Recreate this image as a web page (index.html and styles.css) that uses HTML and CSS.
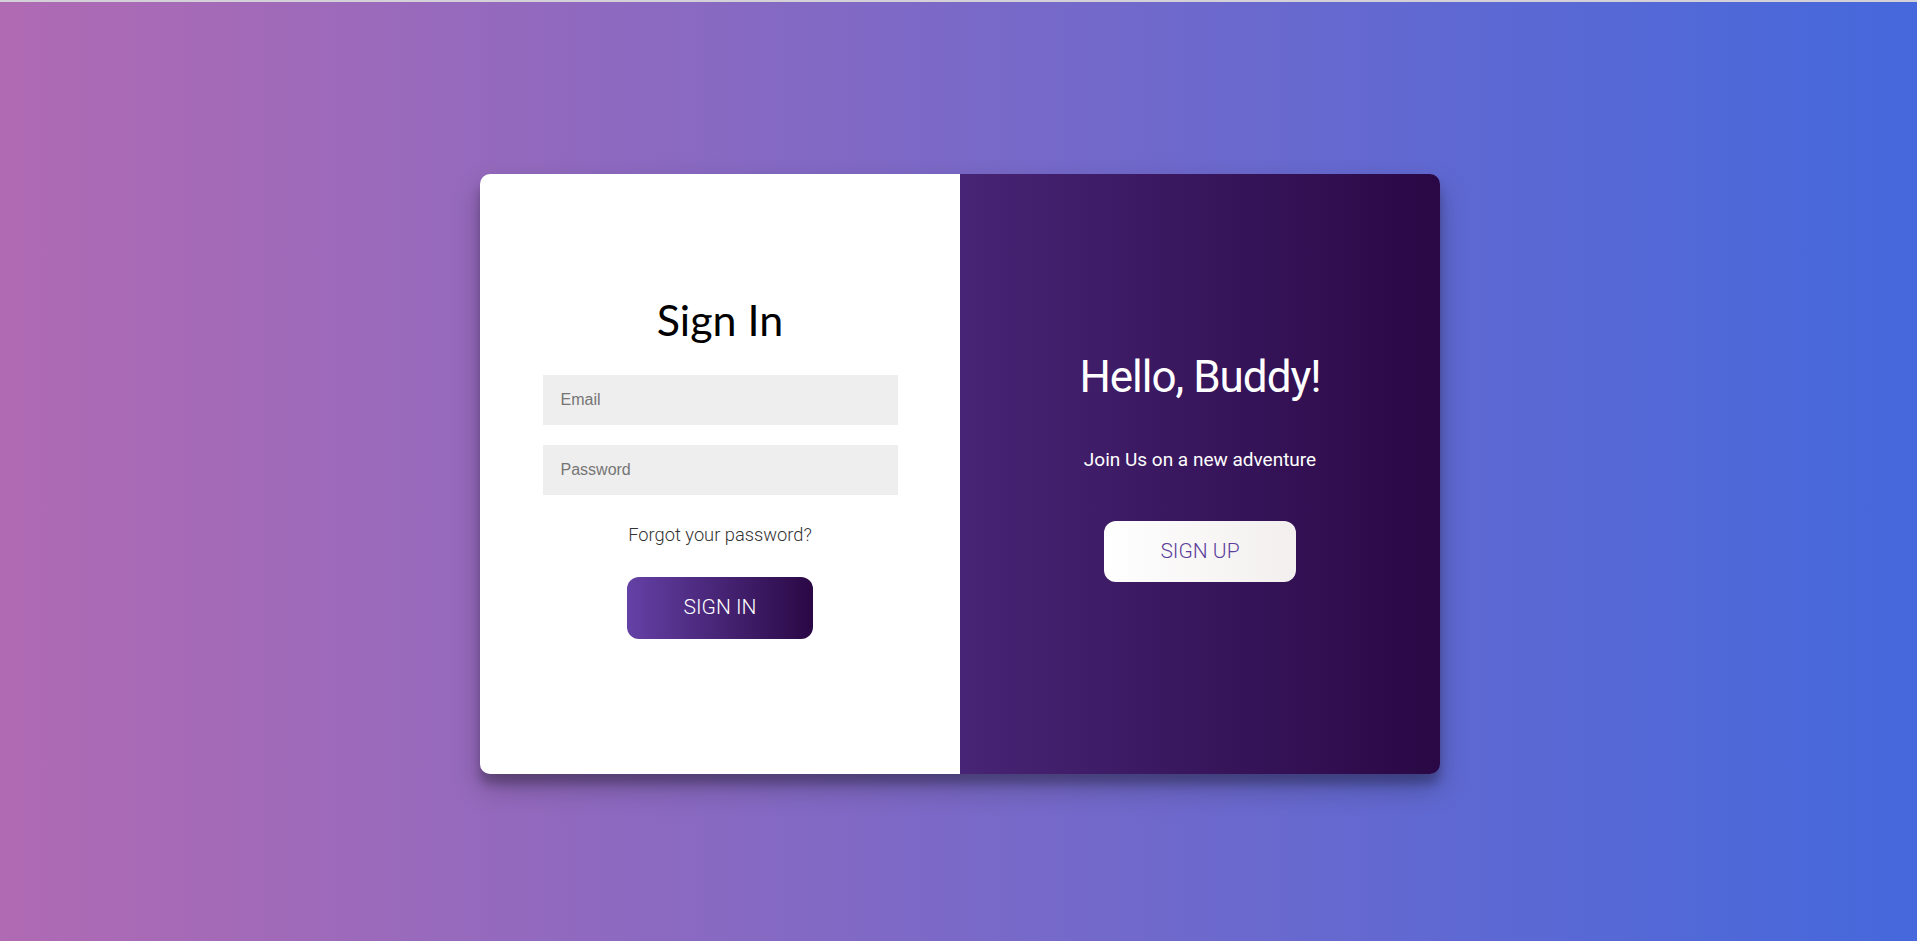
FILE: index.html
```html
<!DOCTYPE html>
<html lang="en">
<head>
<meta charset="utf-8">
<title>Sign In</title>
<link rel="stylesheet" href="styles.css">
</head>
<body>
<div class="page">
  <div class="card">
    <form class="panel panel-signin">
      <h1 class="title">Sign In</h1>
      <input class="field" type="email" placeholder="Email">
      <input class="field field-second" type="password" placeholder="Password">
      <a class="forgot" href="#">Forgot your password?</a>
      <button class="btn btn-primary" type="button">SIGN IN</button>
    </form>
    <div class="panel panel-overlay">
      <h1 class="hello">Hello, Buddy!</h1>
      <p class="join">Join Us on a new adventure</p>
      <button class="btn btn-ghost" type="button">SIGN UP</button>
    </div>
  </div>
</div>
</body>
</html>
```

FILE: styles.css
```css
* { box-sizing: border-box; }

html, body {
  margin: 0;
  padding: 0;
}

body {
  background: linear-gradient(to right, #b06ab3, #4568dc);
  min-height: 100vh;
}

.page {
  min-height: 100vh;
  border-top: 2px solid #d4d0d8;
  padding-top: 4px;
  padding-left: 3px;
  display: flex;
  align-items: center;
  justify-content: center;
}

.card {
  width: 960px;
  height: 600px;
  border-radius: 10px;
  overflow: hidden;
  display: flex;
  box-shadow: 0 14px 28px rgba(0, 0, 0, 0.25), 0 10px 10px rgba(0, 0, 0, 0.22);
}

.panel {
  width: 480px;
  height: 100%;
  display: flex;
  flex-direction: column;
  align-items: center;
  justify-content: center;
  padding-bottom: 10px;
  margin: 0;
}

.panel-signin {
  background: #fff;
}

.panel-overlay {
  background: linear-gradient(to right, #6441a5, #2a0845);
  background-size: 200% 100%;
  background-position: 100% 0;
  color: #fff;
}

.title {
  font-family: Lato, "Liberation Sans", sans-serif;
  font-weight: 400;
  font-size: 43px;
  line-height: 1;
  margin: 0 0 34px;
  color: #000;
}

.field {
  width: 355px;
  height: 50px;
  border: none;
  background: #eee;
  padding: 0 18px;
  font-family: "Liberation Sans", Arial, sans-serif;
  font-size: 16px;
  color: #333;
  outline: none;
}

.field::placeholder {
  color: #757575;
}

.field-second {
  margin-top: 20px;
}

.forgot {
  margin-top: 31px;
  font-family: Roboto, "Liberation Sans", sans-serif;
  font-weight: 300;
  font-size: 18.3px;
  line-height: 1;
  color: #333;
  text-decoration: none;
}

.btn {
  border: none;
  border-radius: 12px;
  font-family: Roboto, "Liberation Sans", sans-serif;
  font-size: 21px;
  font-weight: 300;
  line-height: 1;
  padding: 0;
  cursor: pointer;
}

.btn-primary {
  margin-top: 32px;
  width: 186px;
  height: 62px;
  background: linear-gradient(to right, #6441a5, #2a0845);
  color: #fff;
}

.hello {
  font-family: Roboto, "Liberation Sans", sans-serif;
  font-weight: 400;
  font-size: 44px;
  letter-spacing: -1px;
  line-height: 1;
  margin: 0;
}

.join {
  font-family: Roboto, "Liberation Sans", sans-serif;
  font-weight: 400;
  font-size: 19px;
  line-height: 1;
  margin: 51px 0 0;
}

.btn-ghost {
  margin-top: 52px;
  width: 192px;
  height: 61px;
  background: linear-gradient(to right, #ffffff, #f2efee);
  color: #5b3e9b;
}
```
